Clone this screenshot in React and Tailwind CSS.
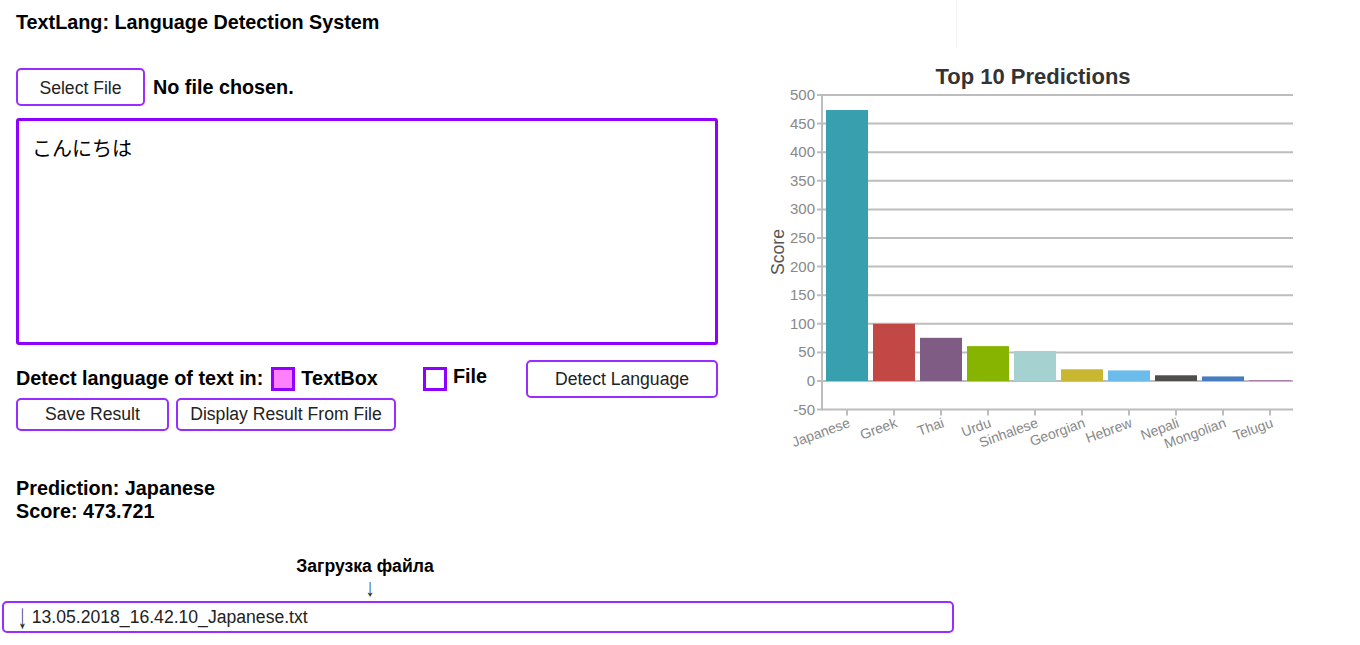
const predictions = [
  { name: "Japanese", score: 473.721, color: "#379fae" },
  { name: "Greek", score: 100, color: "#c24845" },
  { name: "Thai", score: 75.5, color: "#7f5c84" },
  { name: "Urdu", score: 61, color: "#86b400" },
  { name: "Sinhalese", score: 52.5, color: "#a5d1d0" },
  { name: "Georgian", score: 20.5, color: "#c8b731" },
  { name: "Hebrew", score: 18.5, color: "#6bbceb" },
  { name: "Nepali", score: 10, color: "#4f4e4a" },
  { name: "Mongolian", score: 8, color: "#477dbf" },
  { name: "Telugu", score: 1, color: "#a14f9c" },
];

function Chart() {
  const zeroY = 331;
  const k = 0.572;
  const ticks = [500, 450, 400, 350, 300, 250, 200, 150, 100, 50, 0, -50];
  const y = (v) => zeroY - v * k;

  return (
    <svg width="560" height="410" className="block" style={{ fontFamily: '"Liberation Sans", Arial, sans-serif' }}>
      <text x="273" y="34" textAnchor="middle" fontSize="22" fontWeight="bold" fill="#333">
        Top 10 Predictions
      </text>
      <text x="24" y="202" textAnchor="middle" fontSize="17.6" fill="#555" transform="rotate(-90 24 202)">
        Score
      </text>
      {ticks.map((t) => (
        <g key={t}>
          <line x1="57" x2="533" y1={y(t)} y2={y(t)} stroke="#bdbdbd" strokeWidth="2" />
          <text x="55" y={y(t) + 5} textAnchor="end" fontSize="15" fill="#888">
            {t}
          </text>
        </g>
      ))}
      <line x1="62" x2="62" y1={y(500) - 1} y2={y(-50) + 1} stroke="#bdbdbd" strokeWidth="2" />
      {predictions.map((p, i) => {
        const x = 66 + i * 47;
        const top = y(p.score);
        const cx = x + 21;
        return (
          <g key={p.name}>
            <rect x={x} y={top} width="42" height={zeroY - top} fill={p.color} />
            <line x1={cx} x2={cx} y1={y(-50)} y2={y(-50) + 6} stroke="#bdbdbd" strokeWidth="2" />
            <text
              x={cx + 4}
              y={y(-50) + 17}
              textAnchor="end"
              fontSize="14"
              fill="#888"
              transform={`rotate(-20 ${cx + 4} ${y(-50) + 17})`}
            >
              {p.name}
            </text>
          </g>
        );
      })}
    </svg>
  );
}

function PurpleButton({ children, className }) {
  return (
    <button
      type="button"
      className={
        "border-2 border-[#9a2cff] rounded-[5px] bg-white text-[17.6px] text-[#222] " +
        className
      }
    >
      {children}
    </button>
  );
}

export default function App() {
  return (
    <div
      className="relative w-[1360px] h-[645px] bg-white text-black overflow-hidden"
      style={{ fontFamily: '"Liberation Sans", Arial, sans-serif' }}
    >
      <div className="absolute left-[956px] top-0 h-[48px] w-px bg-[#f3f3f3]"></div>

      <div className="flex items-start">
        <div className="w-[718px] pl-4">
          <h1 className="pt-[10px] text-[19.8px] leading-[24px] font-bold">
            TextLang: Language Detection System
          </h1>

          <div className="mt-[34px] flex items-center gap-2">
            <PurpleButton className="w-[129px] h-[38px] pt-[2px]">Select File</PurpleButton>
            <span className="text-[19.8px] font-bold pt-[2px]">No file chosen.</span>
          </div>

          <div
            className="mt-3 h-[227px] border-[3px] border-[#8f00ff] rounded-[3px] px-[13px] pt-[12px] text-[20px]"
            style={{ fontFamily: '"Noto Sans CJK JP", "Liberation Sans", sans-serif' }}
          >
            こんにちは
          </div>

          <div className="mt-[15px] flex items-center h-[38px]">
            <span className="text-[19.8px] font-bold">Detect language of text in:</span>
            <span className="ml-[8px] w-[24px] h-[24px] border-[3px] border-[#8f00ff] bg-[#ff80ff]"></span>
            <span className="ml-[6px] text-[19.8px] font-bold">TextBox</span>
            <span className="ml-[45px] w-[24px] h-[24px] border-[3px] border-[#8f00ff] bg-white"></span>
            <span className="ml-[6px] text-[19.8px] font-bold -mt-[4px]">File</span>
            <PurpleButton className="ml-auto w-[192px] h-[38px]">Detect Language</PurpleButton>
          </div>

          <div className="flex gap-[7px]">
            <PurpleButton className="w-[153px] h-[33px]">Save Result</PurpleButton>
            <PurpleButton className="w-[220px] h-[33px]">Display Result From File</PurpleButton>
          </div>

          <div className="mt-[46px] text-[19.8px] leading-[23px] font-bold">
            <div>Prediction: Japanese</div>
            <div>Score: 473.721</div>
          </div>
        </div>

        <div className="ml-[42px] mt-[50px]">
          <Chart />
        </div>
      </div>

      <div className="w-[954px] mt-[32px]">
        <div className="w-[730px] text-center text-[17.6px] leading-[22px] font-bold">Загрузка файла</div>
        <div className="w-[740px] h-[20px] text-center text-[17.6px] leading-[20px] text-[#222]">
          <span className="inline-block scale-y-[1.4] translate-y-[1px]">↓</span>
        </div>
        <div className="ml-[2px] mt-[4px] h-[32px] border-2 border-[#9a2cff] rounded-[5px] flex items-center pl-[14px] text-[17.6px] text-[#222]">
          <span className="inline-block scale-y-[2] -translate-y-[1px] mr-[5px]">↓</span>
          13.05.2018_16.42.10_Japanese.txt
        </div>
      </div>
    </div>
  );
}
